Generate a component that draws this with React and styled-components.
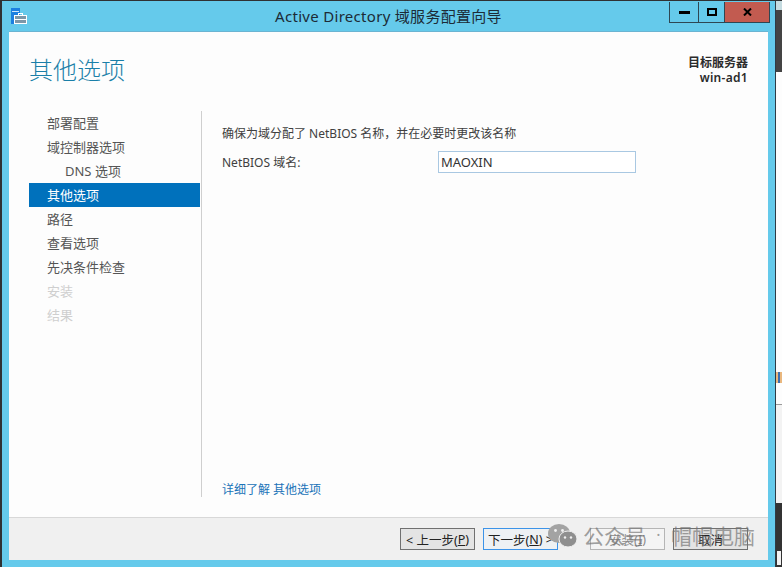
import React from "react";
import styled, { createGlobalStyle } from "styled-components";

const Global = createGlobalStyle`
  html, body { margin: 0; padding: 0; background: #2f3133; }
  body { width: 782px; height: 567px; overflow: hidden; }
  * { box-sizing: border-box; }
`;

const FONT = `"Noto Sans", "Noto Sans CJK SC", sans-serif`;

const Desktop = styled.div`
  width: 782px;
  height: 567px;
  padding: 1px 0 0 2px;
  background: #2f3133;
  font-family: ${FONT};
  position: relative;
  display: flex;
`;

const Window = styled.div`
  width: 774px;
  height: 566px;
  flex: none;
  background: #65caeb;
  border-right: 1px solid #2e3b45;
  display: flex;
  flex-direction: column;
  padding: 0 7px 7px 7px;
`;

const Side = styled.div`
  flex: 1;
  min-width: 0;
  display: flex;
  flex-direction: column;
`;

const SideBand = styled.div`
  height: ${(p) => p.$h}px;
  flex: ${(p) => (p.$h ? "none" : "1")};
  background: ${(p) => p.$bg};
  border-top: ${(p) => (p.$line ? "1px solid #9a9a9a" : "0")};
`;

const SideText = styled.div`
  height: 11px;
  margin-top: 300px;
  background: repeating-linear-gradient(90deg, #e9b77e 0 2px, #3c6fb0 2px 4px);
`;

const SidePage = styled.div`
  height: 332px;
  flex: none;
  background: #fdfdfd;
  overflow: hidden;
`;

const SideGlyph = styled.div`
  width: 4px;
  height: 14px;
  margin: 48px 0 0 1px;
  background: #f2f2f2;
`;

const TitleBar = styled.div`
  height: 31px;
  flex: none;
  display: flex;
  align-items: flex-start;
  position: relative;
  margin: 0 -7px;
`;

const AppIcon = styled.svg`
  width: 16px;
  height: 16px;
  margin: 7px 0 0 9px;
  flex: none;
`;

const Title = styled.div`
  position: absolute;
  left: 0;
  right: 0;
  top: 5px;
  text-align: center;
  font-size: 15px;
  line-height: 21px;
  letter-spacing: 0.3px;
  color: #1c2b36;
`;

const Controls = styled.div`
  position: absolute;
  top: 1px;
  right: 5px;
  display: flex;
  height: 21px;
  border: 1px solid #2e4753;
  border-top: 0;
`;

const Control = styled.div`
  width: ${(p) => p.$w}px;
  height: 100%;
  display: flex;
  align-items: center;
  justify-content: center;
  background: ${(p) => (p.$close ? "#c25b50" : "transparent")};
  border-left: ${(p) => (p.$first ? "0" : "1px solid #2e4753")};
`;

const Panel = styled.div`
  flex: 1;
  min-height: 0;
  background: #fdfdfd;
  display: flex;
  flex-direction: column;
  box-shadow: 0 -1px 0 #6bb4d2;
`;

const Main = styled.div`
  flex: 1;
  min-height: 0;
  display: flex;
  flex-direction: column;
`;

const Header = styled.div`
  height: 79px;
  flex: none;
  display: flex;
  justify-content: space-between;
  padding: 20px 20px 0 20px;
`;

const PageTitle = styled.div`
  font-size: 24px;
  line-height: 36px;
  font-weight: 300;
  color: #1a7fa8;
`;

const Server = styled.div`
  text-align: right;
  font-size: 12px;
  line-height: 15px;
  font-weight: 600;
  color: #2b2b2b;
  padding-top: 3px;
`;

const ServerName = styled.span`
  letter-spacing: 0.3px;
`;

const Body = styled.div`
  flex: 1;
  min-height: 0;
  display: flex;
  padding-bottom: 20px;
`;

const Nav = styled.div`
  width: 193px;
  flex: none;
  padding: 0 0 0 20px;
  border-right: 1px solid #cfcfcf;
`;

const NavList = styled.div`
  margin-right: 1px;
`;

const NavItem = styled.div`
  height: 24px;
  line-height: 24px;
  font-size: 13px;
  padding-left: ${(p) => (p.$indent ? 36 : 18)}px;
  color: ${(p) => (p.$active ? "#ffffff" : p.$off ? "#cfcfcf" : "#555555")};
  background: ${(p) => (p.$active ? "#0071bc" : "transparent")};
`;

const Content = styled.div`
  flex: 1;
  display: flex;
  flex-direction: column;
  padding: 13px 0 0 20px;
  font-size: 12px;
  color: #404040;
`;

const Intro = styled.div`
  line-height: 20px;
`;

const Field = styled.div`
  display: flex;
  align-items: flex-start;
  margin-top: 7px;
`;

const Label = styled.div`
  width: 216px;
  line-height: 22px;
  padding-top: 1px;
`;

const Input = styled.div`
  width: 198px;
  height: 22px;
  border: 1px solid #a9c8e2;
  background: #fff;
  padding-left: 2px;
  line-height: 21px;
  font-size: 13px;
  color: #333;
`;

const Link = styled.div`
  margin-top: auto;
  line-height: 18px;
  color: #1a73b8;
  margin-bottom: -2px;
`;

const Footer = styled.div`
  height: 43px;
  flex: none;
  background: #f0f0f0;
  border-top: 1px solid #d8d8d8;
  display: flex;
  justify-content: flex-end;
  align-items: flex-start;
  gap: 8px;
  padding: 10px 20px 0 0;
`;

const Button = styled.div`
  width: 75px;
  height: 22px;
  flex: none;
  display: flex;
  align-items: center;
  justify-content: center;
  white-space: pre;
  font-size: 12.5px;
  margin-right: ${(p) => (p.$focus ? 24 : 0)}px;
  color: ${(p) => (p.$off ? "#8a8a8a" : "#222")};
  background: ${(p) => (p.$off ? "#f4f4f4" : p.$focus ? "#eef1f4" : "#e4e4e4")};
  border: 1px solid ${(p) => (p.$off ? "#b5b5b5" : p.$focus ? "#3c93e8" : "#707070")};
`;

const Key = styled.span`
  text-decoration: underline;
`;

const Watermark = styled.div`
  position: absolute;
  left: 548px;
  top: 521px;
  height: 28px;
  display: flex;
  align-items: center;
  color: rgba(115, 115, 115, 0.68);
  pointer-events: none;
`;

const WmIcon = styled.svg`
  width: 29px;
  height: 23px;
  margin-right: 6px;
  flex: none;
`;

const WmText = styled.span`
  font-size: 21px;
  line-height: 28px;
  padding-top: 2px;
`;

const WmDot = styled.span`
  width: 25px;
  text-align: center;
  font-size: 16px;
`;

const nav = [
  { t: "部署配置" },
  { t: "域控制器选项" },
  { t: "DNS 选项", indent: true },
  { t: "其他选项", active: true },
  { t: "路径" },
  { t: "查看选项" },
  { t: "先决条件检查" },
  { t: "安装", off: true },
  { t: "结果", off: true },
];

export default function App() {
  return (
    <>
      <Global />
      <Desktop>
        <Window>
          <TitleBar>
            <AppIcon viewBox="0 0 16 16">
              <rect x="0" y="0" width="9" height="16" fill="#1c7fe0" />
              <rect x="1" y="3" width="7" height="1" fill="#cfe6fb" />
              <rect x="3" y="7" width="13" height="9" fill="#fff" />
              <rect x="4" y="8" width="11" height="7" fill="#7d97a8" />
              <rect x="4" y="11" width="11" height="1" fill="#fff" />
              <rect x="7.5" y="5.5" width="4" height="2" fill="none" stroke="#fff" />
            </AppIcon>
            <Title>Active Directory 域服务配置向导</Title>
            <Controls>
              <Control $w={28} $first>
                <svg width="11" height="3"><rect width="11" height="3" fill="#000" /></svg>
              </Control>
              <Control $w={26}>
                <svg width="10" height="8"><rect x="1" y="1" width="8" height="6" fill="none" stroke="#000" strokeWidth="2" /></svg>
              </Control>
              <Control $w={45} $close>
                <svg width="9" height="8" viewBox="0 0 9 8"><path d="M1 0.5 L8 7.5 M8 0.5 L1 7.5" stroke="#000" strokeWidth="2" /></svg>
              </Control>
            </Controls>
          </TitleBar>
          <Panel>
            <Main>
              <Header>
                <PageTitle>其他选项</PageTitle>
                <Server>
                  目标服务器
                  <br />
                  <ServerName>win-ad1</ServerName>
                </Server>
              </Header>
              <Body>
                <Nav>
                  <NavList>
                    {nav.map((n) => (
                      <NavItem key={n.t} $indent={n.indent} $active={n.active} $off={n.off}>
                        {n.t}
                      </NavItem>
                    ))}
                  </NavList>
                </Nav>
                <Content>
                  <Intro>确保为域分配了 NetBIOS 名称，并在必要时更改该名称</Intro>
                  <Field>
                    <Label>NetBIOS 域名:</Label>
                    <Input>MAOXIN</Input>
                  </Field>
                  <Link>详细了解 其他选项</Link>
                </Content>
              </Body>
            </Main>
            <Footer>
              <Button>{"< 上一步("}<Key>P</Key>{")"}</Button>
              <Button $focus>{"下一步("}<Key>N</Key>{") >"}</Button>
              <Button $off>{"安装("}<Key>I</Key>{")"}</Button>
              <Button>取消</Button>
            </Footer>
          </Panel>
        </Window>
        <Side>
          <SideBand $h={9} $bg="#c5dbe0" />
          <SideBand $h={62} $bg="#444444" />
          <SidePage>
            <SideText />
          </SidePage>
          <SideBand $h={99} $bg="#f3f3f3" $line />
          <SideBand $bg="#333333">
            <SideGlyph />
          </SideBand>
        </Side>
        <Watermark>
          <WmIcon viewBox="0 0 29 23">
            <ellipse cx="11" cy="9.5" rx="11" ry="9.5" fill="#a3a3a3" />
            <ellipse cx="20" cy="15" rx="9" ry="8" fill="#8f8f8f" stroke="#f0f0f0" />
            <circle cx="7.5" cy="6.5" r="1.4" fill="#f0f0f0" />
            <circle cx="14.5" cy="6.5" r="1.4" fill="#f0f0f0" />
            <circle cx="17" cy="13.5" r="1.2" fill="#f0f0f0" />
            <circle cx="23" cy="13.5" r="1.2" fill="#f0f0f0" />
          </WmIcon>
          <WmText>公众号</WmText>
          <WmDot>·</WmDot>
          <WmText>帽帽电脑</WmText>
        </Watermark>
      </Desktop>
    </>
  );
}
